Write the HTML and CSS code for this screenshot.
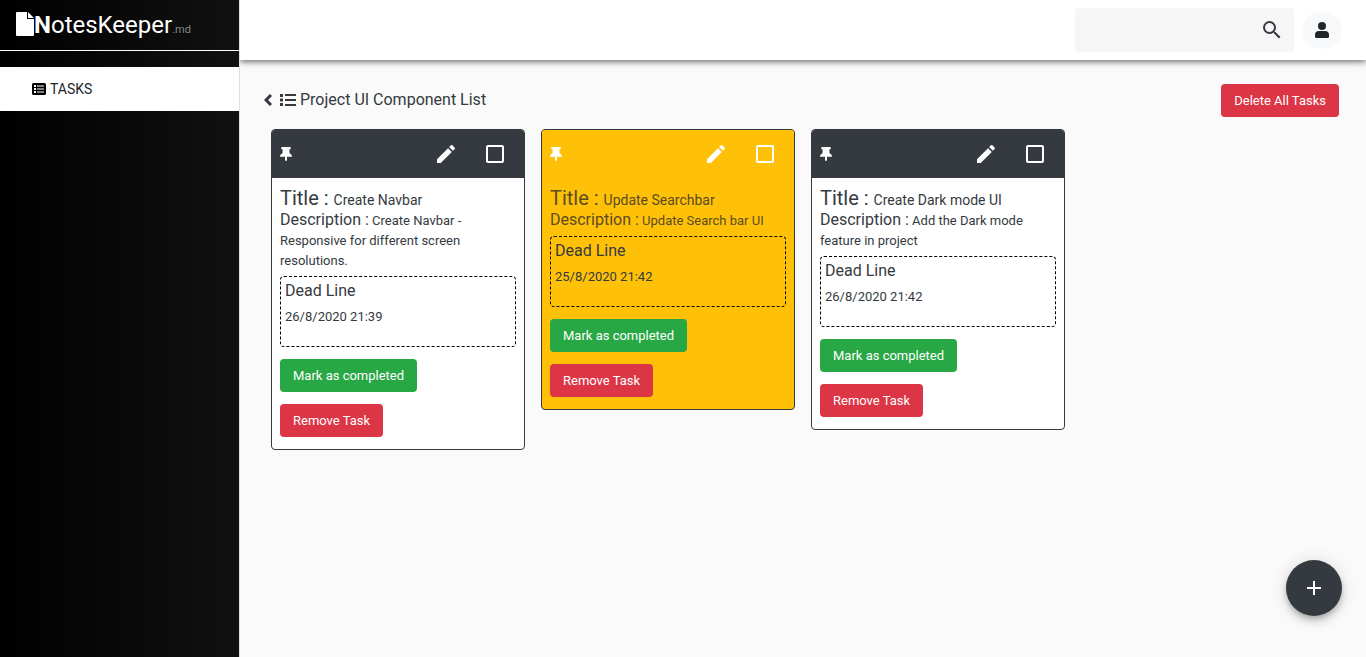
FILE: index.html
```html
<!DOCTYPE html>
<html lang="en">
<head>
<meta charset="utf-8">
<title>NotesKeeper.md</title>
<link rel="stylesheet" href="styles.css">
</head>
<body>
<svg class="sprite" aria-hidden="true">
  <symbol id="pin" viewBox="0 0 12 14"><path d="M2 0h8q.7 0 .7.700v1q0 .7-.7.700h-.8l.4 3.800C11 7 12 8 12 9.200q0 .6-.7.600H7V13l-.6 1h-.8L5 13V9.800H.7q-.7 0-.7-.6C0 8 1 7 2.400 6.200l.4-3.800H2q-.7 0-.7-.7v-1Q1.300 0 2 0z"/></symbol>
  <symbol id="pencil" viewBox="0 0 24 24"><path d="M3 17.250V21h3.750L17.810 9.940l-3.750-3.750L3 17.250zM20.710 7.040a1 1 0 0 0 0-1.410l-2.340-2.340a1 1 0 0 0-1.410 0l-1.830 1.830 3.750 3.750 1.830-1.830z"/></symbol>
</svg>
<div class="app">
  <aside class="sidebar">
    <div class="brand">
      <svg class="brand-icon" viewBox="0 0 18 24"><path d="M0 1.100Q0 0 1.100 0H11v7h7v15.900Q18 24 16.900 24H1.100Q0 24 0 22.900zM12 0l6 6h-6z"/></svg><span class="brand-name"><b>N</b>otesKeeper</span><span class="brand-ext">.md</span>
    </div>
    <nav class="menu">
      <a class="menu-item" href="#tasks">
        <svg class="menu-icon" viewBox="0 0 14 12"><rect width="14" height="12" rx="1.500"/><path fill="#fff" d="M2 2h2v2H2zM2 5h2v2H2zM2 8h2v2H2zM5 2.500h7v1H5zM5 5.500h7v1H5zM5 8.500h7v1H5z"/></svg>
        TASKS
      </a>
    </nav>
  </aside>
  <div class="main">
    <header class="topbar">
      <form class="search">
        <input class="search-input" type="text" aria-label="Search">
        <button class="search-button" type="button" aria-label="Search">
          <svg class="icon" viewBox="0 0 24 24"><path d="M15.500 14h-.79l-.28-.27A6.470 6.470 0 0 0 16 9.500 6.500 6.500 0 1 0 9.500 16c1.610 0 3.090-.59 4.230-1.570l.27.28v.79l5 4.990L20.490 19l-4.990-5zm-6 0C7.010 14 5 11.990 5 9.500S7.010 5 9.500 5 14 7.010 14 9.500 11.990 14 9.500 14z"/></svg>
        </button>
      </form>
      <button class="avatar" type="button" aria-label="Account">
        <svg class="avatar-icon" viewBox="0 0 14 16"><circle cx="7" cy="4" r="4"/><path d="M4 9h6q4 0 4 4v1.500q0 1.500-1.500 1.500h-11Q0 16 0 14.500V13q0-4 4-4z"/></svg>
      </button>
    </header>
    <main class="content">
      <div class="list-head">
        <h1 class="list-title">
          <a class="back" href="#back" aria-label="Back"><svg class="back-icon" viewBox="0 0 8 12"><path d="M7 1L2 6l5 5"/></svg></a>
          <svg class="list-icon" viewBox="0 0 16 14"><path d="M0 1h3v3H0zM0 5.500h3v3H0zM0 10h3v3H0zM5 1h11v2H5zM5 6h11v2H5zM5 11h11v2H5z"/></svg>
          Project UI Component List
        </h1>
        <button class="btn danger" type="button">Delete All Tasks</button>
      </div>
      <div class="cards">
        <article class="card">
          <div class="card-head">
            <svg class="pin"><use href="#pin"/></svg>
            <button class="edit" type="button" aria-label="Edit"><svg class="icon"><use href="#pencil"/></svg></button>
            <input class="tick" type="checkbox" aria-label="Select Create Navbar">
          </div>
          <div class="card-body">
            <h2 class="task-title">Title : <span class="title-value">Create Navbar</span></h2>
            <p class="task-text"><span class="text-label">Description :</span> Create Navbar - Responsive for different screen resolutions.</p>
            <div class="deadline"><h3 class="deadline-title">Dead Line</h3><p class="date">26/8/2020 21:39</p></div>
            <button class="btn success" type="button">Mark as completed</button>
            <button class="btn danger" type="button">Remove Task</button>
          </div>
        </article>
        <article class="card warning">
          <div class="card-head">
            <svg class="pin"><use href="#pin"/></svg>
            <button class="edit" type="button" aria-label="Edit"><svg class="icon"><use href="#pencil"/></svg></button>
            <input class="tick" type="checkbox" aria-label="Select Update Searchbar">
          </div>
          <div class="card-body">
            <h2 class="task-title">Title : <span class="title-value">Update Searchbar</span></h2>
            <p class="task-text"><span class="text-label">Description :</span> Update Search bar UI</p>
            <div class="deadline"><h3 class="deadline-title">Dead Line</h3><p class="date">25/8/2020 21:42</p></div>
            <button class="btn success" type="button">Mark as completed</button>
            <button class="btn danger" type="button">Remove Task</button>
          </div>
        </article>
        <article class="card">
          <div class="card-head">
            <svg class="pin"><use href="#pin"/></svg>
            <button class="edit" type="button" aria-label="Edit"><svg class="icon"><use href="#pencil"/></svg></button>
            <input class="tick" type="checkbox" aria-label="Select Create Dark mode UI">
          </div>
          <div class="card-body">
            <h2 class="task-title">Title : <span class="title-value">Create Dark mode UI</span></h2>
            <p class="task-text"><span class="text-label">Description :</span> Add the Dark mode feature in project</p>
            <div class="deadline"><h3 class="deadline-title">Dead Line</h3><p class="date">26/8/2020 21:42</p></div>
            <button class="btn success" type="button">Mark as completed</button>
            <button class="btn danger" type="button">Remove Task</button>
          </div>
        </article>
      </div>
    </main>
  </div>
  <button class="fab" type="button" aria-label="Add task"><svg class="icon" viewBox="0 0 24 24"><path d="M19 13h-6v6h-2v-6H5v-2h6V5h2v6h6v2z"/></svg></button>
</div>
</body>
</html>
```

FILE: styles.css
```css
* { box-sizing: border-box; }
body {
  margin: 0;
  background: #fafafa;
  color: #343a40;
  font: 14px/20px Roboto, "Liberation Sans", sans-serif;
}
h1, h2, h3, p { margin: 0; font-weight: 400; }
button { font: inherit; border: 0; padding: 0; cursor: pointer; }
svg { fill: currentColor; flex: none; }
.sprite { display: none; }
.icon { width: 24px; height: 24px; display: block; }
.app { display: flex; min-height: 100vh; }

.sidebar {
  flex: none;
  width: 240px;
  border-right: 1px solid #e0e0e0;
  background: linear-gradient(to right, #000, #111);
  color: #fff;
}
.brand {
  display: flex;
  align-items: baseline;
  height: 51px;
  padding: 8px 16px;
  border-bottom: 1px solid #fff;
  font-size: 24px;
  line-height: 34px;
}
.brand b { font-weight: 700; }
.brand-icon { width: 18px; height: 24px; align-self: flex-start; margin-top: 4px; }
.brand-ext { font-size: 11px; color: #888; }
.menu { padding-top: 16px; }
.menu-item {
  display: flex;
  align-items: center;
  gap: 4px;
  height: 44px;
  padding: 0 32px;
  background: #fff;
  color: #212529;
  text-decoration: none;
}
.menu-icon { width: 14px; height: 12px; color: #000; }

.main { flex: 1; min-width: 0; }
.topbar {
  display: flex;
  justify-content: flex-end;
  align-items: center;
  gap: 8px;
  height: 60px;
  padding: 0 24px;
  background: #fff;
  box-shadow: 0 2px 6px rgba(0, 0, 0, .55);
  clip-path: inset(0 0 -10px 0);
}
.search {
  display: flex;
  align-items: center;
  width: 219px;
  height: 44px;
  padding: 0 10px;
  border-radius: 4px;
  background: #f6f6f6;
}
.search-input { flex: 1; min-width: 0; border: 0; outline: 0; background: none; font: inherit; }
.search-button { background: none; color: #343a40; }
.avatar {
  display: grid;
  place-items: center;
  width: 40px;
  height: 38px;
  border-radius: 50%;
  background: #f8f9fa;
  color: #212529;
}
.avatar-icon { width: 14px; height: 16px; }

.content { padding: 24px; }
.list-head { display: flex; justify-content: space-between; padding-right: 3px; }
.list-title { display: flex; align-items: center; gap: 4px; height: 32px; font-size: 16px; }
.back { display: flex; padding-right: 4px; color: inherit; }
.back-icon { width: 8px; height: 12px; fill: none; stroke: currentColor; stroke-width: 3; }
.list-icon { width: 16px; height: 14px; }

.btn {
  height: 33px;
  padding: 0 13px;
  border-radius: 4px;
  color: #fff;
  font-size: 13px;
}
.danger { background: #dc3545; }
.success { background: #28a745; }

.cards { display: flex; flex-wrap: wrap; align-items: flex-start; gap: 16px; padding: 12px 7px; }
.card {
  width: 254px;
  overflow: hidden;
  border: 1px solid #343a40;
  border-radius: 4px;
  background: #fff;
}
.card-head {
  display: flex;
  align-items: center;
  height: 48px;
  padding: 0 20px 0 8px;
  background: #343a40;
  color: #fff;
}
.pin { width: 12px; height: 14px; margin-right: auto; }
.edit { margin-right: 28px; background: none; color: inherit; }
.tick {
  appearance: none;
  width: 18px;
  height: 18px;
  margin: 0;
  border: 2px solid #fff;
  border-radius: 2px;
}
.card-body {
  display: flex;
  flex-direction: column;
  align-items: flex-start;
  gap: 12px;
  padding: 8px 8px 12px;
}
.task-title { font-size: 20px; line-height: 24px; }
.title-value { font-size: 14px; line-height: 16px; }
.task-text { margin-top: -12px; font-size: 13px; }
.text-label { font-size: 16px; }
.deadline {
  width: 100%;
  height: 71px;
  margin-top: -7px;
  padding: 1px 4px 0;
  border: 1px dashed #000;
  border-radius: 4px;
}
.deadline-title { font-size: 16px; line-height: 26px; }
.date { font-size: 13px; line-height: 26px; }
.warning, .warning .card-head { background: #ffc107; }
.warning .task-title, .warning .task-text { color: #5c4b23; }

.fab {
  position: fixed;
  right: 24px;
  bottom: 41px;
  display: grid;
  place-items: center;
  width: 56px;
  height: 56px;
  border-radius: 50%;
  background: #343a40;
  color: #fff;
  box-shadow: 0 3px 5px -1px rgba(0, 0, 0, .2), 0 6px 10px rgba(0, 0, 0, .14), 0 1px 18px rgba(0, 0, 0, .12);
}
```
